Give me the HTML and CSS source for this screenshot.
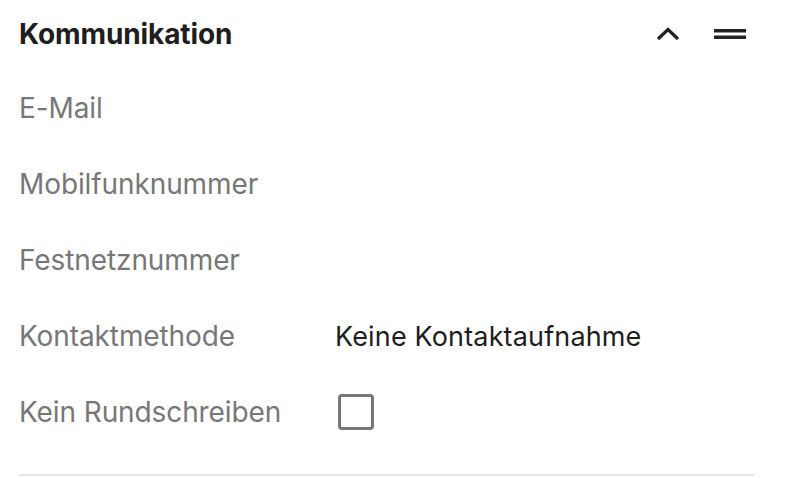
FILE: index.html
```html
<!DOCTYPE html>
<html lang="de">
<head>
<meta charset="utf-8">
<link rel="stylesheet" href="styles.css">
</head>
<body>
<section class="panel">
  <header class="head">
    <h2 class="title">Kommunikation</h2>
    <div class="actions">
      <svg class="chev" width="24" height="14" viewBox="0 0 24 14"><polyline points="2,12 12,2.5 22,12" fill="none" stroke="#222" stroke-width="3.2"/></svg>
      <svg class="menu" width="32" height="12" viewBox="0 0 32 12"><rect x="0" y="1" width="32" height="3.5" fill="#222"/><rect x="0" y="7.5" width="32" height="3.5" fill="#222"/></svg>
    </div>
  </header>
  <div class="rows">
    <div class="row"><span class="label">E-Mail</span><span class="value"></span></div>
    <div class="row"><span class="label">Mobilfunknummer</span><span class="value"></span></div>
    <div class="row"><span class="label">Festnetznummer</span><span class="value"></span></div>
    <div class="row"><span class="label">Kontaktmethode</span><span class="value">Keine Kontaktaufnahme</span></div>
    <div class="row"><span class="label">Kein Rundschreiben</span><span class="value"><span class="check"></span></span></div>
  </div>
  <hr class="divider">
</section>
</body>
</html>
```
FILE: styles.css
```css
html, body { margin: 0; padding: 0; background: #fff; }
body { font-family: Inter, "Noto Sans", sans-serif; }
.panel { padding: 0 32px 0 19px; }
.head { display: flex; align-items: center; justify-content: space-between; height: 68px; }
.title { margin: 0; font-size: 28px; font-weight: 700; color: #1e1e1e; letter-spacing: -0.1px; }
.actions { display: flex; align-items: center; gap: 34px; padding-right: 8px; }
.chev { display: block; }
.menu { display: block; }
.rows { display: flex; flex-direction: column; padding-top: 2px; }
.row { display: flex; align-items: center; height: 76px; }
.label { width: 316px; font-size: 28px; color: #777; letter-spacing: -0.1px; }
.value { font-size: 27px; color: #1e1e1e; display: flex; align-items: center; letter-spacing: 0.15px; }
.check { width: 30px; height: 30px; border: 3px solid #777; border-radius: 4px; margin-left: 3px; }
.divider { border: 0; border-top: 2px solid #e6e6e6; margin: 24px 0 0 0; }
```
